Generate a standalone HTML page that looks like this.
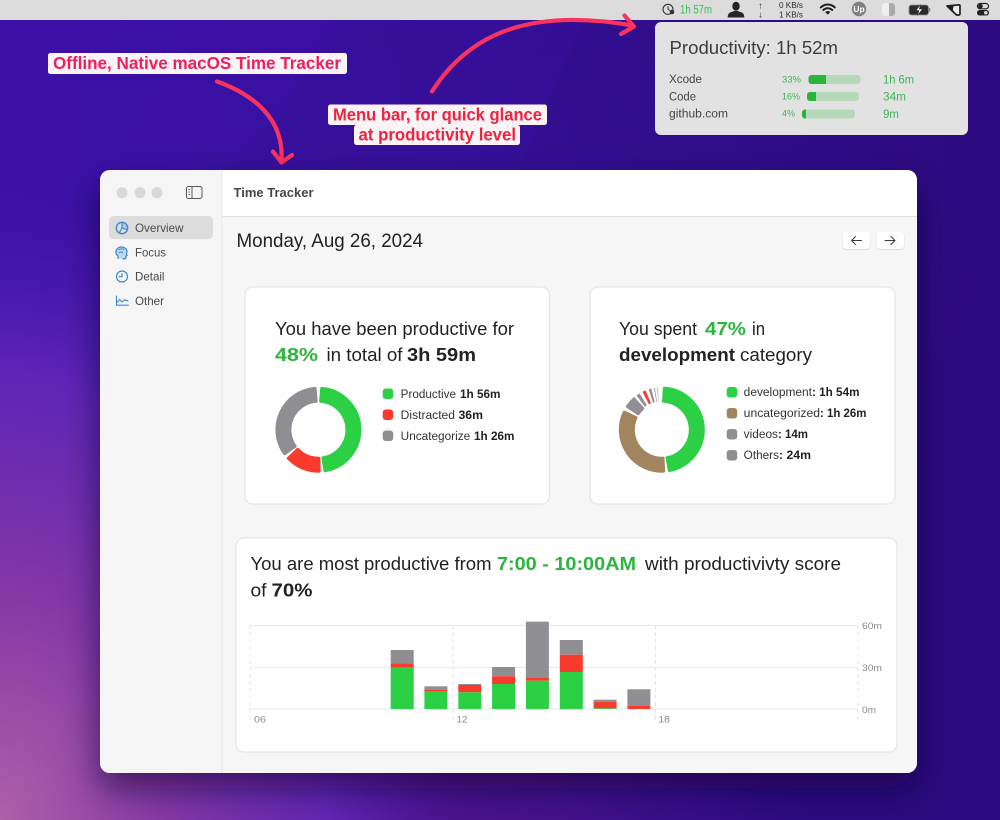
<!DOCTYPE html>
<html lang="en">
<head>
<meta charset="utf-8">
<title>Time Tracker</title>
<style>
html,body{margin:0;padding:0;width:1000px;height:820px;overflow:hidden;background:#3a10a0}
svg{display:block}
text{font-family:"Liberation Sans",sans-serif;white-space:pre}
.b{font-weight:700}
</style>
</head>
<body>
<svg width="1000" height="820" viewBox="0 0 1000 820" xmlns="http://www.w3.org/2000/svg">
<defs>
<linearGradient id="base" x1="0" y1="0" x2="1" y2="0.35">
<stop offset="0" stop-color="#3c11a9"/>
<stop offset="0.55" stop-color="#36109a"/>
<stop offset="1" stop-color="#2c0a80"/>
</linearGradient>
<linearGradient id="band" gradientUnits="userSpaceOnUse" x1="0" y1="20" x2="0" y2="420">
<stop offset="0" stop-color="#2a0a7a" stop-opacity=".3"/>
<stop offset="1" stop-color="#2a0a7a" stop-opacity="0"/>
</linearGradient>
<radialGradient id="lower" gradientUnits="userSpaceOnUse" cx="300" cy="830" r="520">
<stop offset="0" stop-color="#58168c"/>
<stop offset="0.55" stop-color="#48128a" stop-opacity=".75"/>
<stop offset="1" stop-color="#3a0f90" stop-opacity="0"/>
</radialGradient>
<radialGradient id="pink" gradientUnits="userSpaceOnUse" cx="0" cy="0" r="1" gradientTransform="translate(0 820) scale(470 640)">
<stop offset="0" stop-color="#ae60a8"/>
<stop offset="0.35" stop-color="#8638a6"/>
<stop offset="0.7" stop-color="#6428ba" stop-opacity=".85"/>
<stop offset="1" stop-color="#4a18b0" stop-opacity="0"/>
</radialGradient>
<filter id="win" x="-15%" y="-15%" width="130%" height="130%">
<feDropShadow dx="0" dy="15" stdDeviation="17" flood-color="#0e0030" flood-opacity=".62"/>
</filter>
<filter id="card" x="-5%" y="-5%" width="110%" height="110%">
<feDropShadow dx="0" dy="1" stdDeviation="0.7" flood-color="#000" flood-opacity=".14"/>
</filter>
<clipPath id="winclip"><rect x="100" y="170" width="817" height="603" rx="10"/></clipPath>
</defs>

<!-- wallpaper -->
<rect width="1000" height="820" fill="url(#base)"/>
<polygon points="100,320 228,170 355,20 1000,20 1000,420 100,420" fill="url(#band)" opacity=".55"/>
<polygon points="518,170 584,20 1000,20 1000,420 420,420" fill="url(#band)"/>
<rect y="300" width="1000" height="520" fill="url(#lower)"/>
<rect width="1000" height="820" fill="url(#pink)"/>

<!-- menu bar -->
<rect width="1000" height="20" fill="#dcdcdc"/>
<circle cx="668" cy="9.300" r="5" fill="none" stroke="#333" stroke-width="1.100"/>
<path d="M668 6.300v3l2 1.200" fill="none" stroke="#333" stroke-width="1"/>
<circle cx="672" cy="12" r="2.300" fill="#333"/>
<text x="680" y="13.500" font-size="11.500" fill="#35c24f" textLength="32" lengthAdjust="spacingAndGlyphs">1h 57m</text>
<ellipse cx="736" cy="6.200" rx="3.700" ry="4.500" fill="#252525"/>
<path d="M727.700 17.500c0-3.600 1.400-4.800 4-5.500l2.400-1h3.800l2.400 1c2.600.7 4 1.900 4 5.500z" fill="#252525"/>
<text x="760.500" y="8.500" font-size="9" fill="#222" text-anchor="middle">↑</text>
<text x="760.500" y="17.500" font-size="9" fill="#222" text-anchor="middle">↓</text>
<text x="779" y="8" font-size="8" fill="#2a2a2a" textLength="24" lengthAdjust="spacingAndGlyphs">0 KB/s</text>
<text x="779" y="17.300" font-size="8" fill="#2a2a2a" textLength="24" lengthAdjust="spacingAndGlyphs">1 KB/s</text>
<g fill="none" stroke="#1d1d1d" stroke-width="2" stroke-linecap="round">
<path d="M820.800 7.400c4.200-3.900 9.800-3.900 14 0"/>
<path d="M823.300 10c2.800-2.400 6.200-2.400 9 0"/>
</g>
<path d="M825.200 12c1.500-1.200 3.700-1.200 5.200 0l-2.600 2.600z" fill="#1d1d1d"/>
<circle cx="859" cy="9" r="7.200" fill="#7f7f7f"/>
<text x="859" y="12" font-size="8.500" font-weight="700" fill="#fff" text-anchor="middle">Up</text>
<rect x="882" y="3" width="13" height="13" rx="3" fill="#eeeeee"/>
<path d="M889 3h3a3 3 0 0 1 3 3v7a3 3 0 0 1-3 3h-3z" fill="#ababab"/>
<rect x="909" y="5" width="19.500" height="10" rx="2.500" fill="#2c2c2c" stroke="#8a8a8a" stroke-width=".8"/>
<path d="M920.500 4.500l-4.500 6h3l-1.500 5 5-6.500h-3.200z" fill="#f2f2f2" stroke="#2c2c2c" stroke-width=".5"/>
<rect x="929" y="8" width="1.200" height="3.500" fill="#777"/>
<path d="M947 6L959 4.800Q960 4.800 960 6V13.500Q960 15 958.500 15H956.500Z" fill="#ececec" stroke="#1f1f1f" stroke-width="1.700" stroke-linejoin="round"/>
<path d="M947 6L953.800 5.300L952.800 9.800L956.500 15Z" fill="#1f1f1f"/>
<rect x="977.500" y="3.500" width="11" height="5.300" rx="2.650" fill="#dcdcdc" stroke="#222" stroke-width="1.200"/>
<circle cx="980.500" cy="6.150" r="2.300" fill="#222"/>
<rect x="977" y="10" width="12" height="5.500" rx="2.750" fill="#222"/>
<circle cx="985.800" cy="12.750" r="1.800" fill="#dcdcdc"/>

<!-- popover -->
<rect x="655" y="22" width="313" height="113" rx="6" fill="#e2e2e2"/>
<text x="669.500" y="54" font-size="18" fill="#3d3d3d" textLength="168.500" lengthAdjust="spacingAndGlyphs">Productivity: 1h 52m</text>
<text x="669" y="83" font-size="11.500" fill="#444" textLength="33" lengthAdjust="spacingAndGlyphs">Xcode</text>
<text x="669" y="100.700" font-size="11.500" fill="#444" textLength="27" lengthAdjust="spacingAndGlyphs">Code</text>
<text x="669" y="117.700" font-size="11.500" fill="#444" textLength="59" lengthAdjust="spacingAndGlyphs">github.com</text>
<text x="782" y="82.300" font-size="9" fill="#3cb554" textLength="19" lengthAdjust="spacingAndGlyphs">33%</text>
<text x="782" y="99.500" font-size="9" fill="#3cb554" textLength="18" lengthAdjust="spacingAndGlyphs">16%</text>
<text x="782" y="116.700" font-size="9" fill="#3cb554" textLength="13" lengthAdjust="spacingAndGlyphs">4%</text>
<rect x="808.500" y="75" width="52" height="9" rx="3" fill="#b5d9b8"/>
<path d="M811.500 75h14.500v9h-14.500a3 3 0 0 1-3-3v-3a3 3 0 0 1 3-3z" fill="#27b53a"/>
<rect x="807" y="92" width="52" height="9" rx="3" fill="#b5d9b8"/>
<path d="M810 92h6v9h-6a3 3 0 0 1-3-3v-3a3 3 0 0 1 3-3z" fill="#27b53a"/>
<rect x="802" y="109.500" width="53" height="9" rx="3" fill="#b5d9b8"/>
<path d="M805 109.500h1v9h-1a3 3 0 0 1-3-3v-3a3 3 0 0 1 3-3z" fill="#27b53a"/>
<text x="883" y="83.500" font-size="12" fill="#3cb554" textLength="31" lengthAdjust="spacingAndGlyphs">1h 6m</text>
<text x="883" y="100.500" font-size="12" fill="#3cb554" textLength="23" lengthAdjust="spacingAndGlyphs">34m</text>
<text x="883" y="117.800" font-size="12" fill="#3cb554" textLength="16" lengthAdjust="spacingAndGlyphs">9m</text>

<!-- annotations -->
<rect x="48" y="53" width="299" height="21" rx="2.500" fill="#fbf5fa"/>
<text x="53" y="69" font-size="17.500" font-weight="700" fill="#f01f5a" textLength="288" lengthAdjust="spacingAndGlyphs">Offline, Native macOS Time Tracker</text>
<rect x="328" y="104.500" width="219" height="20.500" rx="2.500" fill="#fbf3f6"/>
<rect x="354" y="125" width="166" height="20" rx="2.500" fill="#fbf3f6"/>
<text x="333" y="120.700" font-size="17.500" font-weight="700" fill="#ee2340" textLength="209" lengthAdjust="spacingAndGlyphs">Menu bar, for quick glance</text>
<text x="358.500" y="140.700" font-size="17.500" font-weight="700" fill="#ee2340" textLength="157.500" lengthAdjust="spacingAndGlyphs">at productivity level</text>
<g fill="none" stroke="#f8345e" stroke-width="4.200" stroke-linecap="round" stroke-linejoin="round">
<path d="M217 81.500C255 95 284 120 281.500 160"/>
<path d="M273 151.500L281.500 162.500L292 155"/>
<path d="M432 91.500C470 32 532 8 633 25.500"/>
<path d="M624.500 15.500L634 26.500L621 34"/>
</g>

<!-- window -->
<rect x="100" y="170" width="817" height="603" rx="10" fill="#f6f6f6" filter="url(#win)"/>
<g clip-path="url(#winclip)">
<rect x="100" y="170" width="122" height="603" fill="#f5f5f5"/>
<rect x="222" y="170" width="695" height="46" fill="#ffffff"/>
<rect x="222" y="216" width="695" height="1" fill="#e2e2e2"/>
<rect x="221.500" y="170" width="1" height="603" fill="#e6e6e6"/>
</g>
<circle cx="122" cy="192.700" r="5.500" fill="#d8d8d8"/>
<circle cx="140" cy="192.700" r="5.500" fill="#d8d8d8"/>
<circle cx="157" cy="192.700" r="5.500" fill="#d8d8d8"/>
<rect x="186.500" y="186.500" width="15.500" height="12" rx="2" fill="none" stroke="#5a5a5a" stroke-width="1"/>
<path d="M192 186.500v12" stroke="#5a5a5a" stroke-width="1"/>
<path d="M188.500 189.500h1.500M188.500 192h1.500M188.500 194.500h1.500" stroke="#5a5a5a" stroke-width=".9"/>

<rect x="109" y="216" width="104" height="23" rx="4.500" fill="#dcdcdc"/>
<path d="M122 228v-5.500a5.500 5.500 0 0 1 5.300 7z" fill="#a8c9ec"/>
<g fill="none" stroke="#3f87d0" stroke-width="1.400" stroke-linecap="round" stroke-linejoin="round">
<circle cx="122" cy="228" r="5.700"/>
<path d="M122 222.500v5.500l5 1.600M122 228l-2.500 4.500" stroke-width="1.100"/>
</g>
<path d="M118 258.500v-2.500c-2-1.500-2.500-3.500-1.800-5.500.8-2.600 3.300-3.700 5.800-3.500 2.900.2 5 2.100 5 4.700 0 1-.6 1.500-.6 2.200l.7 1.600-1.200.5v1.600c0 .9-.7 1.300-1.500 1.300h-1.400" fill="#bcd6f0" stroke="#3f87d0" stroke-width="1.200" stroke-linecap="round" stroke-linejoin="round"/>
<path d="M118.500 250c1.500-1.500 4-1.500 5.500-.5M119 252.700c1.200-.7 3-.7 4.200 0" fill="none" stroke="#3f87d0" stroke-width="1"/>
<g fill="none" stroke="#3f87d0" stroke-width="1.200" stroke-linecap="round" stroke-linejoin="round">
<circle cx="122" cy="276.500" r="5.500"/>
<path d="M122 273.500v3.200h-2.800"/>
</g>
<g fill="none" stroke="#3f87d0" stroke-width="1.100" stroke-linejoin="round" stroke-linecap="round">
<path d="M116.500 296v9.200h12"/>
<path d="M116.800 302.500l2.800-3 2.600 2.500 2.500-2.200 3.200 1"/>
</g>
<text x="135" y="232" font-size="12" fill="#4a4a4a" textLength="48.500" lengthAdjust="spacingAndGlyphs">Overview</text>
<text x="135" y="256.500" font-size="12" fill="#4a4a4a" textLength="31" lengthAdjust="spacingAndGlyphs">Focus</text>
<text x="135" y="280.500" font-size="12" fill="#4a4a4a" textLength="29.500" lengthAdjust="spacingAndGlyphs">Detail</text>
<text x="135" y="305" font-size="12" fill="#4a4a4a" textLength="29" lengthAdjust="spacingAndGlyphs">Other</text>

<text x="233.500" y="197" font-size="12.500" class="b" fill="#474747" textLength="80" lengthAdjust="spacingAndGlyphs">Time Tracker</text>
<text x="236.500" y="247" font-size="19.500" fill="#222" textLength="186.500" lengthAdjust="spacingAndGlyphs">Monday, Aug 26, 2024</text>

<rect x="843" y="232" width="27" height="17" rx="4" fill="#fff" filter="url(#card)"/>
<rect x="876.500" y="232" width="27.500" height="17" rx="4" fill="#fff" filter="url(#card)"/>
<g fill="none" stroke="#3a3a3a" stroke-width="1" stroke-linecap="round" stroke-linejoin="round">
<path d="M851.500 240.500h10M855.500 236.500l-4 4 4 4"/>
<path d="M885 240.500h10M891 236.500l4 4-4 4"/>
</g>

<!-- card 1 -->
<rect x="245" y="287" width="304.500" height="217" rx="8" fill="#fff" stroke="#e6e6e6" stroke-width="1.300"/>
<text x="275" y="335" font-size="18.500" fill="#222" textLength="239" lengthAdjust="spacingAndGlyphs">You have been productive for</text>
<text x="275" y="361" font-size="18.500" class="b" fill="#2bb53d" textLength="43" lengthAdjust="spacingAndGlyphs">48%</text>
<text x="326.500" y="361" font-size="18.500" fill="#222" textLength="76" lengthAdjust="spacingAndGlyphs">in total of</text>
<text x="407" y="361" font-size="18.500" class="b" fill="#222" textLength="69" lengthAdjust="spacingAndGlyphs">3h 59m</text>

<g stroke-width="3" stroke-linejoin="round">
<path d="M321.660 388.330A41.500 41.500 0 0 1 324.890 470.690L322.860 457.850A28.500 28.500 0 0 0 320.640 401.290Z" fill="#2bd045" stroke="#2bd045"/>
<path d="M319.120 471.190A41.500 41.500 0 0 1 288.300 458.270L297.730 449.320A28.500 28.500 0 0 0 318.900 458.200Z" fill="#fb3a2e" stroke="#fb3a2e"/>
<path d="M284.610 453.800A41.500 41.500 0 0 1 315.140 388.330L316.160 401.290A28.500 28.500 0 0 0 295.200 446.250Z" fill="#8e8e93" stroke="#8e8e93"/>
</g>
<rect x="382.700" y="388.500" width="10.500" height="10.500" rx="3" fill="#2bd045"/>
<rect x="382.700" y="409.500" width="10.500" height="10.500" rx="3" fill="#fb3a2e"/>
<rect x="382.700" y="430.500" width="10.500" height="10.500" rx="3" fill="#8e8e93"/>
<text x="400.700" y="398" font-size="11.500" fill="#333" textLength="55.300" lengthAdjust="spacingAndGlyphs">Productive</text>
<text x="460" y="398" font-size="11.500" class="b" fill="#222" textLength="40.500" lengthAdjust="spacingAndGlyphs">1h 56m</text>
<text x="400.700" y="419" font-size="11.500" fill="#333" textLength="54.300" lengthAdjust="spacingAndGlyphs">Distracted</text>
<text x="458.500" y="419" font-size="11.500" class="b" fill="#222" textLength="24.500" lengthAdjust="spacingAndGlyphs">36m</text>
<text x="400.700" y="440" font-size="11.500" fill="#333" textLength="69.500" lengthAdjust="spacingAndGlyphs">Uncategorize</text>
<text x="474" y="440" font-size="11.500" class="b" fill="#222" textLength="40.500" lengthAdjust="spacingAndGlyphs">1h 26m</text>

<!-- card 2 -->
<rect x="590" y="287" width="305" height="217" rx="8" fill="#fff" stroke="#e6e6e6" stroke-width="1.300"/>
<text x="619" y="335" font-size="18.500" fill="#222" textLength="78" lengthAdjust="spacingAndGlyphs">You spent</text>
<text x="705" y="335" font-size="18.500" class="b" fill="#2bb53d" textLength="41" lengthAdjust="spacingAndGlyphs">47%</text>
<text x="752" y="335" font-size="18.500" fill="#222" textLength="13" lengthAdjust="spacingAndGlyphs">in</text>
<text x="619" y="361" font-size="18.500" class="b" fill="#222" textLength="116" lengthAdjust="spacingAndGlyphs">development</text>
<text x="740" y="361" font-size="18.500" fill="#222" textLength="72" lengthAdjust="spacingAndGlyphs">category</text>

<g stroke-width="3" stroke-linejoin="round">
<path d="M664.330 388.280A41.500 41.500 0 0 1 669.360 470.510L666.990 457.720A28.500 28.500 0 0 0 663.540 401.250Z" fill="#2bd045" stroke="#2bd045"/>
<path d="M663.610 471.160A41.500 41.500 0 0 1 624.190 412.160L635.970 417.660A28.500 28.500 0 0 0 663.040 458.170Z" fill="#a2845e" stroke="#a2845e"/>
<path d="M627.400 406.490A41.500 41.500 0 0 1 634.030 398.860L642.730 408.520A28.500 28.500 0 0 0 638.170 413.760Z" fill="#8e8e93" stroke="#8e8e93"/>
</g>
<g fill="none" stroke-width="14" transform="rotate(-90 661.800 429.700)">
<circle cx="661.800" cy="429.700" r="35.500" pathLength="360" stroke="#8e8e93" stroke-dasharray="5 360" stroke-dashoffset="-323.500"/>
<circle cx="661.800" cy="429.700" r="35.500" pathLength="360" stroke="#fb3a2e" stroke-dasharray="4.500 360" stroke-dashoffset="-333"/>
<circle cx="661.800" cy="429.700" r="35.500" pathLength="360" stroke="#8e8e93" stroke-dasharray="3.500 360" stroke-dashoffset="-342"/>
<circle cx="661.800" cy="429.700" r="35.500" pathLength="360" stroke="#a8a8ac" stroke-dasharray="1.500 360" stroke-dashoffset="-349"/>
<circle cx="661.800" cy="429.700" r="35.500" pathLength="360" stroke="#c0c0c4" stroke-dasharray="1.200 360" stroke-dashoffset="-353"/>
</g>
<rect x="726.700" y="387" width="10.500" height="10.500" rx="3" fill="#2bd045"/>
<rect x="726.700" y="408" width="10.500" height="10.500" rx="3" fill="#a2845e"/>
<rect x="726.700" y="429" width="10.500" height="10.500" rx="3" fill="#8e8e93"/>
<rect x="726.700" y="450" width="10.500" height="10.500" rx="3" fill="#8e8e93"/>
<text x="743.700" y="396" font-size="11.500" fill="#333" textLength="68.300" lengthAdjust="spacingAndGlyphs">development</text>
<text x="812" y="396" font-size="11.500" class="b" fill="#222" textLength="47.500" lengthAdjust="spacingAndGlyphs">: 1h 54m</text>
<text x="743.700" y="417" font-size="11.500" fill="#333" textLength="76.300" lengthAdjust="spacingAndGlyphs">uncategorized</text>
<text x="820" y="417" font-size="11.500" class="b" fill="#222" textLength="46.500" lengthAdjust="spacingAndGlyphs">: 1h 26m</text>
<text x="743.700" y="438" font-size="11.500" fill="#333" textLength="34.300" lengthAdjust="spacingAndGlyphs">videos</text>
<text x="778" y="438" font-size="11.500" class="b" fill="#222" textLength="30" lengthAdjust="spacingAndGlyphs">: 14m</text>
<text x="743.700" y="459" font-size="11.500" fill="#333" textLength="35.300" lengthAdjust="spacingAndGlyphs">Others</text>
<text x="779" y="459" font-size="11.500" class="b" fill="#222" textLength="32" lengthAdjust="spacingAndGlyphs">: 24m</text>

<!-- card 3 -->
<rect x="236" y="538" width="661" height="214" rx="8" fill="#fff" stroke="#e6e6e6" stroke-width="1.300"/>
<text x="250.500" y="570" font-size="18.500" fill="#222" textLength="241" lengthAdjust="spacingAndGlyphs">You are most productive from</text>
<text x="497" y="570" font-size="18.500" class="b" fill="#2bb53d" textLength="139" lengthAdjust="spacingAndGlyphs">7:00 - 10:00AM</text>
<text x="645" y="570" font-size="18.500" fill="#222" textLength="196" lengthAdjust="spacingAndGlyphs">with productivivty score</text>
<text x="250.500" y="596.500" font-size="18.500" fill="#222" textLength="16" lengthAdjust="spacingAndGlyphs">of</text>
<text x="271.500" y="596.500" font-size="18.500" class="b" fill="#222" textLength="41" lengthAdjust="spacingAndGlyphs">70%</text>

<!-- chart -->
<g stroke="#ececec" stroke-width="1.200">
<path d="M250 625.500H858M250 667.500H858M250 709H858"/>
</g>
<g stroke="#e3e3e3" stroke-width="1" stroke-dasharray="4 3" fill="none">
<path d="M250 625V723M453 625V723M655.500 625V723M858 625V723"/>
</g>
<g>
<rect x="390.700" y="650" width="23" height="13.300" fill="#8e8e93"/><rect x="390.700" y="663.300" width="23" height="4.400" fill="#fb3a2e"/><rect x="390.700" y="667.700" width="23" height="41.300" fill="#2bd045"/>
<rect x="424.400" y="686.300" width="23" height="3.700" fill="#8e8e93"/><rect x="424.400" y="690" width="23" height="1.700" fill="#fb3a2e"/><rect x="424.400" y="691.700" width="23" height="17.300" fill="#2bd045"/>
<rect x="458.300" y="684" width="23" height="1" fill="#8e8e93"/><rect x="458.300" y="685" width="23" height="7.300" fill="#fb3a2e"/><rect x="458.300" y="692.300" width="23" height="16.700" fill="#2bd045"/>
<rect x="492.100" y="667" width="23" height="9.300" fill="#8e8e93"/><rect x="492.100" y="676.300" width="23" height="7.700" fill="#fb3a2e"/><rect x="492.100" y="684" width="23" height="25" fill="#2bd045"/>
<rect x="525.900" y="621.700" width="23" height="56.300" fill="#8e8e93"/><rect x="525.900" y="678" width="23" height="2.700" fill="#fb3a2e"/><rect x="525.900" y="680.700" width="23" height="28.300" fill="#2bd045"/>
<rect x="559.800" y="640" width="23" height="14.700" fill="#8e8e93"/><rect x="559.800" y="654.700" width="23" height="17.300" fill="#fb3a2e"/><rect x="559.800" y="672" width="23" height="37" fill="#2bd045"/>
<rect x="593.600" y="699.700" width="23" height="2" fill="#8e8e93"/><rect x="593.600" y="701.700" width="23" height="6.600" fill="#fb3a2e"/><rect x="593.600" y="708.300" width="23" height=".7" fill="#2bd045"/>
<rect x="627.400" y="689.300" width="23" height="16.700" fill="#8e8e93"/><rect x="627.400" y="706" width="23" height="3" fill="#fb3a2e"/>
</g>
<g font-size="9.500" fill="#8a8a8a">
<text x="254" y="722.500" textLength="12" lengthAdjust="spacingAndGlyphs">06</text>
<text x="456.500" y="722.500" textLength="11" lengthAdjust="spacingAndGlyphs">12</text>
<text x="658.500" y="722.500" textLength="11.500" lengthAdjust="spacingAndGlyphs">18</text>
<text x="862" y="629" textLength="20" lengthAdjust="spacingAndGlyphs">60m</text>
<text x="862" y="671" textLength="20" lengthAdjust="spacingAndGlyphs">30m</text>
<text x="862" y="713" textLength="14" lengthAdjust="spacingAndGlyphs">0m</text>
</g>
</svg>
</body>
</html>
